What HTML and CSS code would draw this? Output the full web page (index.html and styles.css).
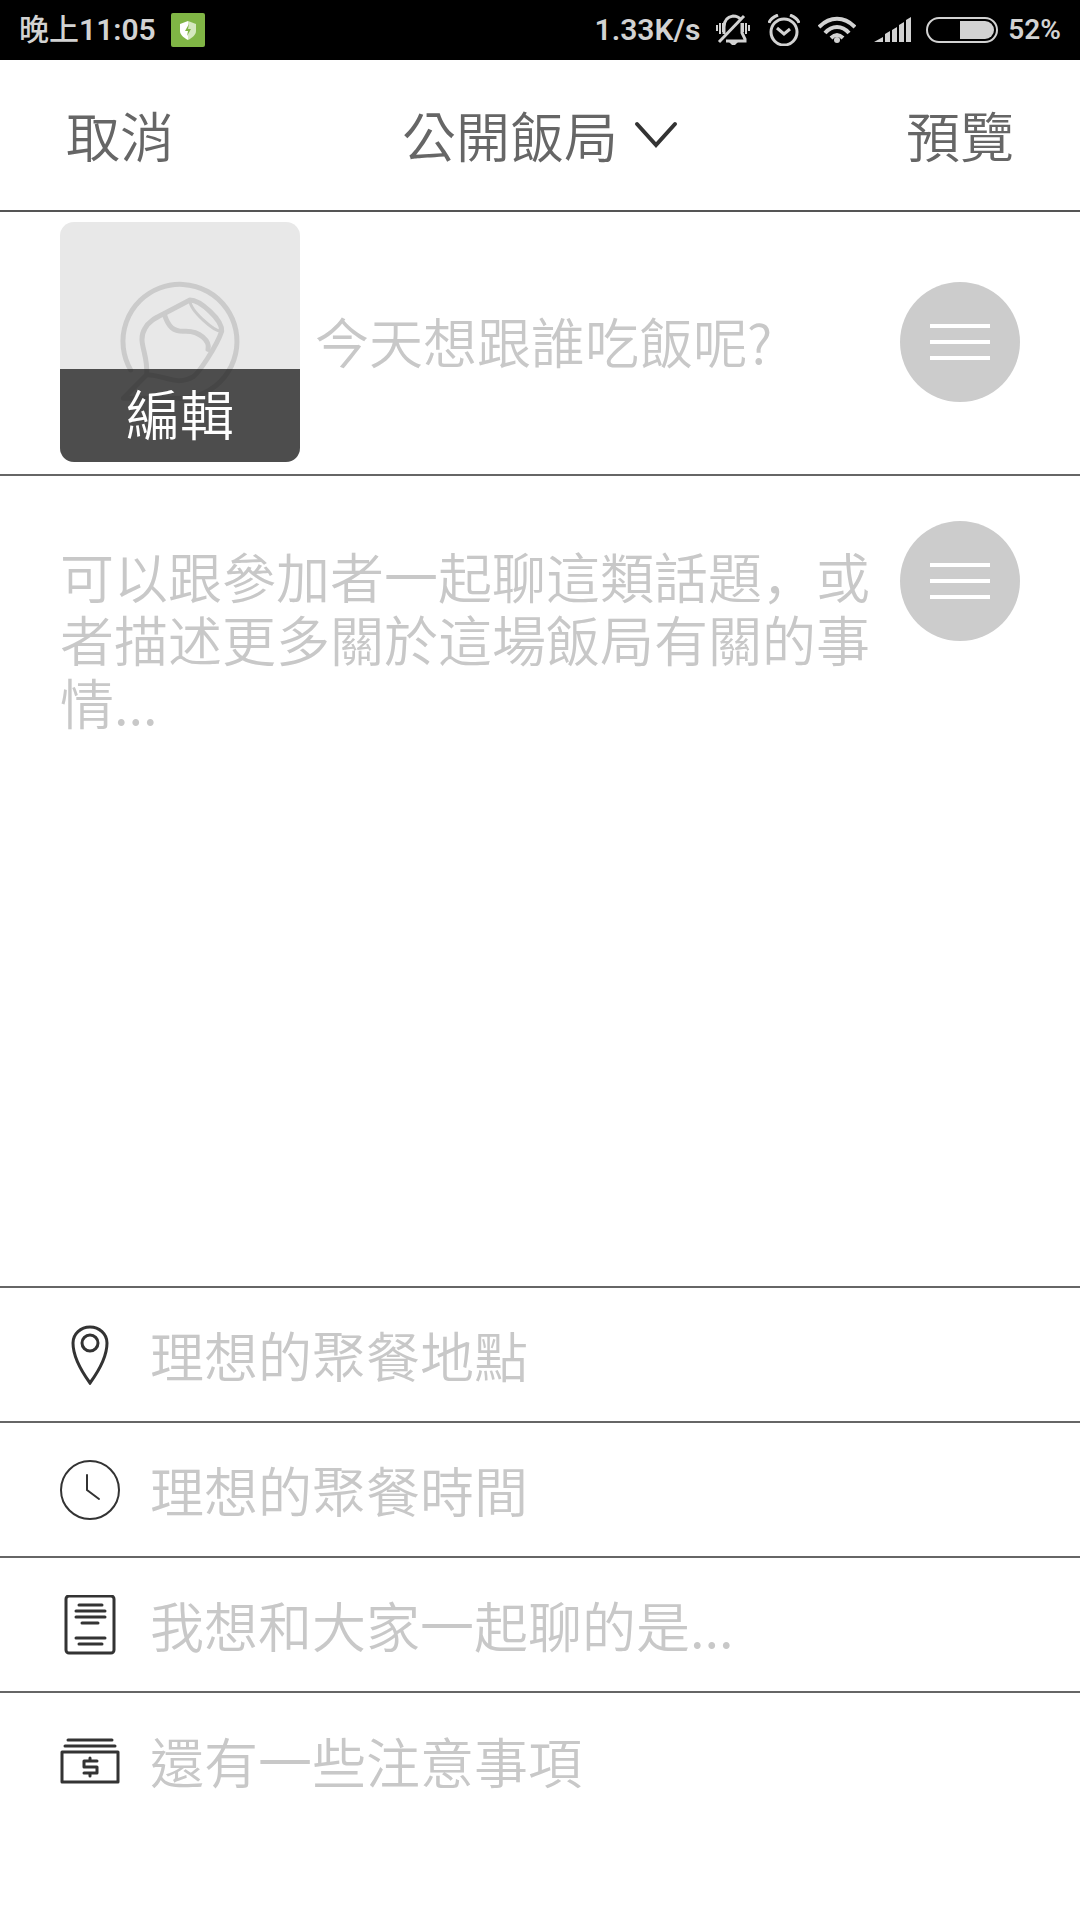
FILE: index.html
```html
<!DOCTYPE html>
<html lang="zh-Hant">
<head>
  <meta charset="UTF-8">
  <meta name="viewport" content="width=device-width, initial-scale=1.0">
  <title>公開飯局</title>
  <link rel="stylesheet" href="styles.css">
</head>
<body>
  <div class="status-bar">
    <span><span class="period">晚上</span>11:05</span>
    <svg class="app-badge" width="34" height="34" viewBox="0 0 34 34">
      <rect width="34" height="34" rx="2" fill="#80b545"/>
      <path d="M17 8l-8 3v7c0 4 4 7 8 9z" fill="#fff"/>
      <path d="M17 8l8 3v7c0 4-4 7-8 9z" fill="#d5e8bf"/>
      <path d="M18 11l-4 7h3l-1 5 4-7h-3z" fill="#80b545"/>
    </svg>
    <span class="speed">1.33K/s</span>
    <svg width="34" height="32" viewBox="0 0 34 32" fill="none" stroke="#d2d2d2" stroke-width="2">
      <path d="M8 20V13C8 7 11 3 17 2c4 0 6 1 8 4M26 9v10l3 6v2H10" stroke-width="3"/>
      <path d="M3 28L28 2" stroke-width="3"/>
      <path d="M1 11v6M4 9v11M7 9v9M27 9v9M30 9v11M33 11v6"/>
      <path d="M13 28h9l-3 3h-3z" fill="#d2d2d2" stroke="none"/>
    </svg>
    <svg class="alarm" width="32" height="32" viewBox="0 0 32 32" fill="none" stroke="#d2d2d2" stroke-width="3">
      <circle cx="16" cy="18" r="13"/>
      <path d="M9 14l7 6 6-5M1 9c1-4 4-6 9-8M31 9c-1-4-4-6-9-8"/>
    </svg>
    <svg class="wifi" width="38" height="28" viewBox="0 0 38 28" fill="none" stroke="#d2d2d2" stroke-width="4">
      <path d="M1 11c11-11 25-11 36 0M7 17c7-8 17-8 24 0M13 22c4-4 8-4 12 0"/>
      <circle cx="19" cy="24" r="3" fill="#d2d2d2" stroke="none"/>
    </svg>
    <svg class="signal" width="37" height="26" viewBox="0 0 37 26" fill="#d2d2d2">
      <path d="M0 25l9-5v5zM11 17l5-3v11h-5zM18 13l5-3v15h-5zM25 8l5-3v20h-5zM32 3l5-3v25h-5z"/>
    </svg>
    <svg class="battery" width="72" height="26" viewBox="0 0 72 26">
      <rect x="1" y="1" width="70" height="24" rx="12" fill="none" stroke="#d2d2d2" stroke-width="2"/>
      <path d="M34 4h25a9 9 0 0 1 0 18H34z" fill="#d2d2d2"/>
    </svg>
    <span class="percent">52%</span>
  </div>

  <form class="page">
    <header class="header">
      <button type="button">取消</button>
      <label class="type">
        <select aria-label="飯局類型">
          <option>公開飯局</option>
        </select>
        <svg width="44" height="28" viewBox="0 0 44 28" fill="none" stroke="#333" stroke-width="4" stroke-linecap="round">
          <path d="M3 4l19 21L41 4"/>
        </svg>
      </label>
      <button type="button">預覽</button>
    </header>

    <section class="topic">
      <button type="button" class="cover">
        <svg viewBox="60 36 720 720" fill="none" stroke="#cbcbcb" stroke-width="15" stroke-linecap="round" stroke-linejoin="round">
          <path d="M272 480A171 171 0 1 1 425 565H250L320 494"/>
          <path d="M320 494C325 430 290 395 315 355C325 335 345 325 370 312L450 270C480 270 548 330 545 364C530 410 475 490 460 500C410 530 375 495 320 494z"/>
          <path d="M374 316C385 350 400 364 430 364C480 360 510 395 504 418"/>
          <path d="M450 272C450 300 525 370 545 362" stroke-width="9"/>
        </svg>
        <span>編輯</span>
      </button>
      <input type="text" aria-label="標題" placeholder="今天想跟誰吃飯呢?">
      <button type="button" class="more" aria-label="標題範例">
        <svg width="60" height="40" viewBox="0 0 60 40" stroke="#fff" stroke-width="4">
          <path d="M0 4h60M0 20h60M0 36h60"/>
        </svg>
      </button>
    </section>

    <section class="description">
      <textarea lang="zh-Hans" aria-label="描述" placeholder="可以跟參加者一起聊這類話題，或者描述更多關於這場飯局有關的事情..."></textarea>
      <button type="button" class="more" aria-label="描述範例">
        <svg width="60" height="40" viewBox="0 0 60 40" stroke="#fff" stroke-width="4">
          <path d="M0 4h60M0 20h60M0 36h60"/>
        </svg>
      </button>
    </section>

    <label class="row">
      <svg width="60" height="60" viewBox="0 0 60 60" fill="none" stroke="#333" stroke-width="3">
        <path d="M30 58C22 47 13 32 13 18a17 16 0 0 1 34 0C47 32 38 47 30 58z"/>
        <circle cx="30" cy="18" r="8"/>
      </svg>
      <input type="text" aria-label="地點" placeholder="理想的聚餐地點">
    </label>
    <label class="row">
      <svg width="60" height="60" viewBox="0 0 60 60" fill="none" stroke="#333" stroke-width="2" stroke-linecap="round">
        <circle cx="30" cy="30" r="29"/>
        <path d="M27 15v15l12 9"/>
      </svg>
      <input type="text" aria-label="時間" placeholder="理想的聚餐時間">
    </label>
    <label class="row">
      <svg width="60" height="60" viewBox="0 0 60 60" fill="none" stroke="#333" stroke-width="3" stroke-linecap="round">
        <rect x="6" y="1" width="48" height="57" rx="3"/>
        <path d="M19 10h23M16 16h29M16 22h29M22 28h16M16 43h29M19 49h23"/>
      </svg>
      <input type="text" aria-label="話題" placeholder="我想和大家一起聊的是...">
    </label>
    <label class="row">
      <svg width="60" height="60" viewBox="0 0 60 60" fill="none" stroke="#333" stroke-width="3" stroke-linecap="round" stroke-linejoin="round">
        <path d="M8 9h44M5 15h50M2 21h56v30H2z"/>
        <path d="M37 30H24v6h13v6H24M30 27v2M30 43v2"/>
      </svg>
      <input type="text" aria-label="注意事項" placeholder="還有一些注意事項">
    </label>
  </form>
</body>
</html>
```
FILE: styles.css
```css
* {
  box-sizing: border-box;
}

body {
  margin: 0;
  background: #fff;
  font-family: "Noto Sans CJK SC", sans-serif;
}

button,
input,
select,
textarea {
  margin: 0;
  padding: 0;
  border: none;
  border-radius: 0;
  outline: none;
  background: none;
  font-family: inherit;
  font-size: 54px;
  font-weight: 350;
  line-height: 63px;
  color: #666;
}

svg {
  display: block;
  flex-shrink: 0;
}

::placeholder {
  color: #c8c8c8;
  opacity: 1;
}

.status-bar {
  display: flex;
  align-items: center;
  height: 60px;
  padding: 0 19px;
  background: #000;
  color: #d2d2d2;
  font-family: Roboto, "Noto Sans CJK SC", sans-serif;
  font-size: 30px;
  font-weight: 600;
  line-height: 34px;
}

.period {
  font-weight: 500;
}

.app-badge {
  margin-left: 15px;
}

.speed {
  margin-left: auto;
  margin-right: 16px;
}

.alarm,
.wifi,
.signal {
  margin-left: 18px;
}

.battery {
  margin: 0 10px 0 15px;
}

.percent {
  font-size: 28px;
}

.header {
  display: flex;
  justify-content: space-between;
  align-items: center;
  height: 152px;
  padding: 0 66px 2px;
  border-bottom: 2px solid #555;
}

.type {
  display: flex;
  align-items: center;
  gap: 16px;
}

.type select {
  appearance: none;
  height: 63px;
}

.topic {
  display: flex;
  align-items: center;
  padding: 10px 60px 12px;
  border-bottom: 2px solid #666;
}

.cover {
  position: relative;
  flex-shrink: 0;
  width: 240px;
  height: 240px;
  margin-right: 15px;
  border-radius: 14px;
  overflow: hidden;
  background: #e8e8e8;
}

.cover span {
  position: absolute;
  left: 0;
  right: 0;
  bottom: 0;
  padding: 12px 0 18px;
  background: rgba(25, 25, 25, 0.75);
  color: #fff;
}

.topic input {
  flex: 1;
  min-width: 0;
  padding-bottom: 4px;
}

.more {
  display: flex;
  flex-shrink: 0;
  justify-content: center;
  align-items: center;
  width: 120px;
  height: 120px;
  border-radius: 50%;
  background: #ccc;
}

.description {
  display: flex;
  padding: 45px 60px;
  border-bottom: 2px solid #666;
}

.description textarea {
  flex: 1;
  min-width: 0;
  height: 720px;
  padding-top: 23px;
  margin-right: 15px;
  resize: none;
}

.row {
  display: flex;
  align-items: center;
  gap: 30px;
  height: 135px;
  padding: 0 60px;
  border-bottom: 2px solid #666;
}

.row:last-child {
  border-bottom: none;
}

.row input {
  flex: 1;
  min-width: 0;
}
```
